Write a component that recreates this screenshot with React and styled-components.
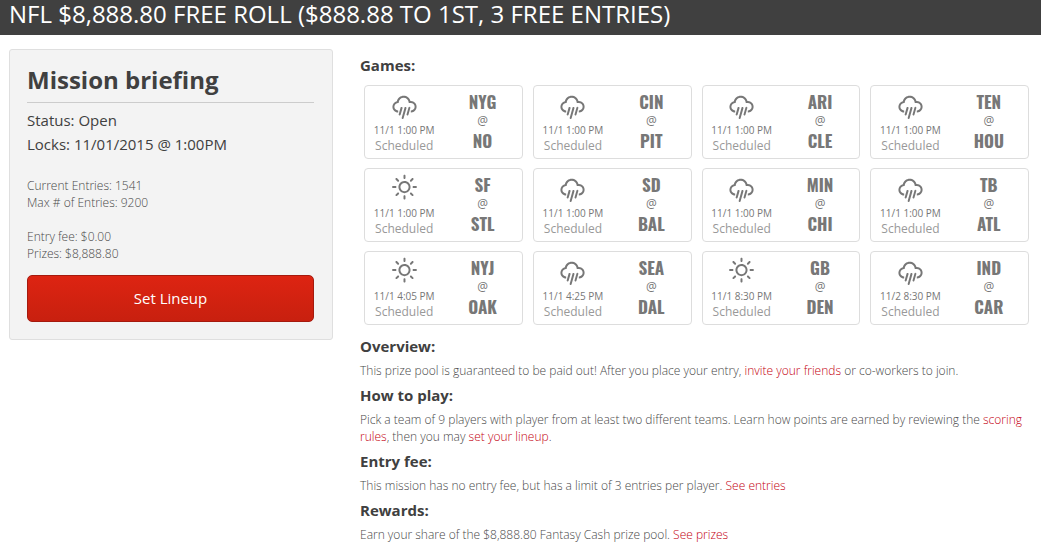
import React from "react";
import styled, { createGlobalStyle } from "styled-components";
import { WiDaySunny, WiRain } from "react-icons/wi";

const games = [
  { away: "NYG", home: "NO", time: "11/1 1:00 PM", weather: "rain" },
  { away: "CIN", home: "PIT", time: "11/1 1:00 PM", weather: "rain" },
  { away: "ARI", home: "CLE", time: "11/1 1:00 PM", weather: "rain" },
  { away: "TEN", home: "HOU", time: "11/1 1:00 PM", weather: "rain" },
  { away: "SF", home: "STL", time: "11/1 1:00 PM", weather: "sunny" },
  { away: "SD", home: "BAL", time: "11/1 1:00 PM", weather: "rain" },
  { away: "MIN", home: "CHI", time: "11/1 1:00 PM", weather: "rain" },
  { away: "TB", home: "ATL", time: "11/1 1:00 PM", weather: "rain" },
  { away: "NYJ", home: "OAK", time: "11/1 4:05 PM", weather: "sunny" },
  { away: "SEA", home: "DAL", time: "11/1 4:25 PM", weather: "rain" },
  { away: "GB", home: "DEN", time: "11/1 8:30 PM", weather: "sunny" },
  { away: "IND", home: "CAR", time: "11/2 8:30 PM", weather: "rain" },
];

const GameCard = ({ game }) => {
  const Icon = game.weather === "rain" ? WiRain : WiDaySunny;

  return (
    <Card>
      <Kickoff>
        <Icon size={35} aria-hidden="true" />
        <div className="time">{game.time}</div>
        <div className="status">Scheduled</div>
      </Kickoff>
      <Matchup>
        <div className="team">{game.away}</div>
        <div className="at">@</div>
        <div className="team">{game.home}</div>
      </Matchup>
    </Card>
  );
};

const App = () => {
  return (
    <>
      <GlobalStyle />
      <Header>
        <h1>NFL $8,888.80 FREE ROLL ($888.88 TO 1ST, 3 FREE ENTRIES)</h1>
      </Header>
      <Page>
        <Briefing>
          <BriefingTitle>Mission briefing</BriefingTitle>
          <Status>
            <div>Status: Open</div>
            <div>Locks: 11/01/2015 @ 1:00PM</div>
          </Status>
          <Facts>
            <div>Current Entries: 1541</div>
            <div>Max # of Entries: 9200</div>
          </Facts>
          <Facts>
            <div>Entry fee: $0.00</div>
            <div>Prizes: $8,888.80</div>
          </Facts>
          <LineupButton type="button">Set Lineup</LineupButton>
        </Briefing>
        <Details>
          <SectionTitle>Games:</SectionTitle>
          <Games>
            {games.map((game) => (
              <GameCard key={game.away} game={game} />
            ))}
          </Games>
          <SectionTitle>Overview:</SectionTitle>
          <Copy>
            This prize pool is guaranteed to be paid out! After you place your
            entry, <a href="#invite">invite your friends</a> or co-workers to
            join.
          </Copy>
          <SectionTitle>How to play:</SectionTitle>
          <Copy>
            Pick a team of 9 players with player from at least two different
            teams. Learn how points are earned by reviewing the{" "}
            <a href="#rules">scoring rules</a>, then you may{" "}
            <a href="#lineup">set your lineup</a>.
          </Copy>
          <SectionTitle>Entry fee:</SectionTitle>
          <Copy>
            This mission has no entry fee, but has a limit of 3 entries per
            player. <a href="#entries">See entries</a>
          </Copy>
          <SectionTitle>Rewards:</SectionTitle>
          <Copy>
            Earn your share of the $8,888.80 Fantasy Cash prize pool.{" "}
            <a href="#prizes">See prizes</a>
          </Copy>
        </Details>
      </Page>
    </>
  );
};

export default App;

const GlobalStyle = createGlobalStyle`
  * {
    box-sizing: border-box;
  }
  body {
    margin: 0;
    background: #fff;
    color: #777;
    font-family: "Open Sans", "Noto Sans", sans-serif;
    font-size: 12px;
    line-height: 17px;
  }
  h1, h2, h3, p {
    margin: 0;
  }
`;

const Header = styled.header`
  padding: 0 9px 7px;
  background: #404040;

  h1 {
    color: #fff;
    font-size: 24px;
    font-weight: 400;
    line-height: 28px;
  }
`;

const Page = styled.main`
  display: grid;
  grid-template-columns: minmax(0, 324fr) minmax(0, 673fr);
  gap: 27px;
  align-items: start;
  padding: 14px 8px 0 9px;
`;

const Briefing = styled.aside`
  padding: 12px 18px 17px 17px;
  background: #f3f3f3;
  border: 1px solid #dfdfdf;
  border-radius: 3px;
`;

const BriefingTitle = styled.h2`
  padding-bottom: 5px;
  border-bottom: 1px solid #ccc;
  color: #404040;
  font-size: 24px;
  font-weight: 700;
  line-height: 35px;
`;

const Status = styled.div`
  margin: 5px 0 21px;
  color: #404040;
  font-size: 15px;
  line-height: 24px;
`;

const Facts = styled.div`
  color: #484848;
  font-weight: 300;

  & + & {
    margin-top: 17px;
  }
`;

const LineupButton = styled.button`
  display: block;
  width: 100%;
  height: 47px;
  margin-top: 13px;
  padding: 0 6px 2px;
  background: linear-gradient(#dd2412, #c8200f);
  border: 1px solid #a51a0e;
  border-radius: 5px;
  color: #fff;
  font-family: inherit;
  font-size: 15px;
  cursor: pointer;
`;

const Details = styled.section`
  padding-top: 5px;
`;

const SectionTitle = styled.h3`
  color: #404040;
  font-size: 15px;
  font-weight: 700;
  line-height: 22px;
`;

const Games = styled.div`
  display: grid;
  grid-template-columns: repeat(4, minmax(0, 1fr));
  gap: 9px 10px;
  margin: 9px 4px 10px;
`;

const Card = styled.article`
  display: grid;
  grid-template-columns: 1fr 1fr;
  height: 74px;
  border: 1px solid #ddd;
  border-radius: 4px;
  text-align: center;
`;

const Kickoff = styled.div`
  svg {
    display: block;
    margin: 1px auto;
  }
  .time {
    font-size: 10px;
    line-height: 14px;
  }
  .status {
    color: #999;
    line-height: 17px;
  }
`;

const Matchup = styled.div`
  padding-top: 5px;

  .team {
    font-family: Oswald, "Liberation Sans Narrow", "Liberation Sans", sans-serif;
    font-size: 17px;
    font-weight: 700;
    line-height: 21px;
  }
  .at {
    line-height: 18px;
  }
`;

const Copy = styled.p`
  margin: 5px 0;
  color: #484848;
  font-weight: 300;

  a {
    color: #c4000f;
    text-decoration: none;
  }
`;
